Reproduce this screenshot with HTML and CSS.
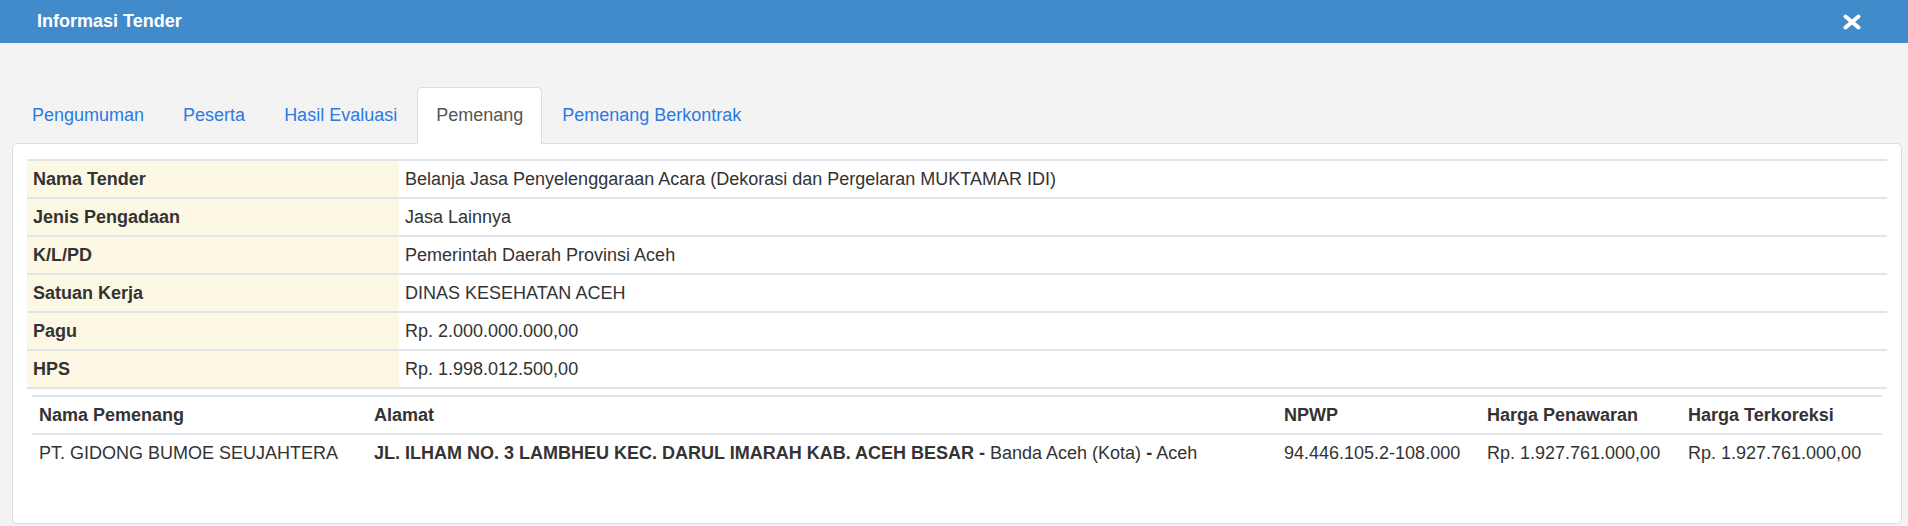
FILE: index.html
```html
<!DOCTYPE html>
<html lang="id">
<head>
    <meta charset="UTF-8">
    <meta name="viewport" content="width=device-width, initial-scale=1.0">
    <title>Informasi Tender</title>
    <link rel="stylesheet" href="styles.css">
</head>
<body>
    <div class="modal-header">
        <h4 class="modal-title">Informasi Tender</h4>
        <span class="close">
            <svg width="18" height="16" viewBox="0 0 18 16"><path d="M2.5 2.5 L15.5 13.5 M15.5 2.5 L2.5 13.5" stroke="#fff" stroke-width="4" stroke-linecap="round" fill="none"/></svg>
        </span>
    </div>
    <div class="modal-body">
        <ul class="nav-tabs">
            <li><a href="#">Pengumuman</a></li>
            <li><a href="#">Peserta</a></li>
            <li><a href="#">Hasil Evaluasi</a></li>
            <li class="active"><a href="#">Pemenang</a></li>
            <li><a href="#">Pemenang Berkontrak</a></li>
        </ul>
        <div class="tab-content">
            <table class="info-table">
                <tr><td class="label">Nama Tender</td><td>Belanja Jasa Penyelenggaraan Acara (Dekorasi dan Pergelaran MUKTAMAR IDI)</td></tr>
                <tr><td class="label">Jenis Pengadaan</td><td>Jasa Lainnya</td></tr>
                <tr><td class="label">K/L/PD</td><td>Pemerintah Daerah Provinsi Aceh</td></tr>
                <tr><td class="label">Satuan Kerja</td><td>DINAS KESEHATAN ACEH</td></tr>
                <tr><td class="label">Pagu</td><td>Rp. 2.000.000.000,00</td></tr>
                <tr><td class="label">HPS</td><td>Rp. 1.998.012.500,00</td></tr>
            </table>
            <div class="winner-wrap">
                <table class="winner-table">
                    <thead>
                        <tr>
                            <th class="col-nama">Nama Pemenang</th>
                            <th class="col-alamat">Alamat</th>
                            <th class="col-npwp">NPWP</th>
                            <th class="col-harga">Harga Penawaran</th>
                            <th>Harga Terkoreksi</th>
                        </tr>
                    </thead>
                    <tbody>
                        <tr>
                            <td>PT. GIDONG BUMOE SEUJAHTERA</td>
                            <td><b>JL. ILHAM NO. 3 LAMBHEU KEC. DARUL IMARAH KAB. ACEH BESAR -</b> Banda Aceh (Kota) <b>-</b> Aceh</td>
                            <td>94.446.105.2-108.000</td>
                            <td>Rp. 1.927.761.000,00</td>
                            <td>Rp. 1.927.761.000,00</td>
                        </tr>
                    </tbody>
                </table>
            </div>
        </div>
    </div>
</body>
</html>
```

FILE: styles.css
```css
html,body{margin:0;padding:0;}
body{background-color:#f3f3f3;font-family:"Liberation Sans",Arial,sans-serif;font-size:18px;color:#333;}
.modal-header{display:flex;align-items:center;justify-content:space-between;height:43px;box-sizing:border-box;padding:0 47px 0 37px;background-color:#428bca;color:#fff;}
.modal-title{margin:0;font-size:18px;font-weight:bold;line-height:25px;}
.close svg{display:block;margin-top:1px;}
.modal-body{padding:44px 6px 0 12px;}
.nav-tabs{display:flex;list-style:none;margin:0;padding:0 0 0 1px;}
.nav-tabs li{margin:0 1px -1px 0;}
.nav-tabs a{display:block;padding:15px 18px 16px;line-height:25px;border:1px solid transparent;border-bottom:none;border-radius:5px 5px 0 0;color:#2a7ae2;text-decoration:none;}
.nav-tabs li.active{position:relative;}
.nav-tabs li.active a{background-color:#fff;border-color:#dcdcdc;color:#555;}
.tab-content{background-color:#fff;border:1px solid #dcdcdc;border-radius:5px;padding:15px 14px 52px;}
.info-table,.winner-table{width:100%;border-collapse:separate;border-spacing:0;}
.info-table td{padding:6px;line-height:24px;border-top:2px solid #e1e4e8;text-align:left;}
.info-table tr:last-child td{border-bottom:2px solid #e1e4e8;}
.info-table td.label{width:20%;background-color:#fcf8e3;font-weight:bold;}
.winner-wrap{padding:0 5px;margin-top:6px;}
.winner-table{table-layout:fixed;}
.winner-table th{padding:6px 7px;line-height:24px;text-align:left;font-weight:bold;border-top:2px solid #e1e4e8;border-bottom:2px solid #e1e4e8;}
.winner-table td{padding:6px 7px;line-height:24px;white-space:nowrap;}
.winner-table .col-nama{width:321px;}
.winner-table .col-alamat{width:896px;}
.winner-table .col-npwp{width:189px;}
.winner-table .col-harga{width:187px;}
```
